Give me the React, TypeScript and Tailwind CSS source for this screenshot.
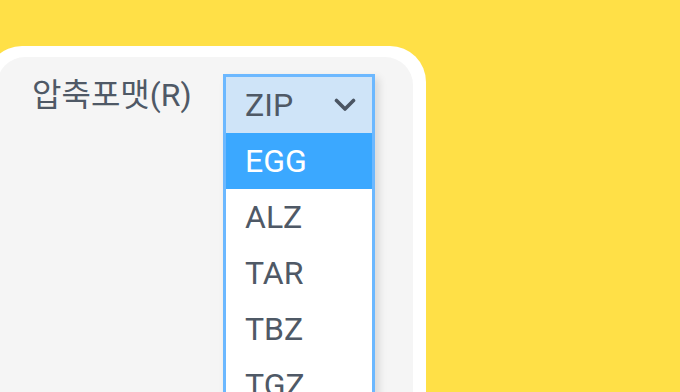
import React from "react";

const items = ["EGG", "ALZ", "TAR", "TBZ", "TGZ", "7Z"];

export default function App() {
  return (
    <div
      className="w-[680px] h-[392px] overflow-hidden bg-[#ffe047] pt-[46px]"
      style={{ fontFamily: "Roboto, 'Noto Sans CJK KR', sans-serif" }}
    >
      <div className="ml-[-14px] w-[440px] h-[400px] rounded-[36px] bg-white p-[11px] pr-[13px]">
        <div className="h-[420px] rounded-[28px] bg-[#f5f5f5] pt-[16px] pl-[35px] flex items-start">
          <div className="w-[191px] pt-[2px] text-[32px] leading-[40px] text-[#4f5966] font-normal">
            압축포맷(R)
          </div>
          <div className="mt-[1px] w-[152px] border-[3px] border-[#6cb8ff] bg-white shadow-[4px_4px_8px_rgba(0,0,0,0.12)]">
            <div className="h-[56px] bg-[#cfe4f8] flex items-center justify-between pl-[19px] pr-[16px] text-[32px] text-[#4f5966]">
              <span className="leading-none">ZIP</span>
              <svg width="22" height="14" viewBox="0 0 22 14" fill="none">
                <path d="M2.5 2.5 L11 11 L19.5 2.5" stroke="#4b5563" strokeWidth="3.6" strokeLinecap="round" strokeLinejoin="round" />
              </svg>
            </div>
            {items.map((it, i) => (
              <div
                key={it}
                className={
                  i === 0
                    ? "h-[56px] flex items-center pl-[19px] text-[32px] bg-[#3ba8ff] text-white"
                    : "h-[56px] flex items-center pl-[19px] text-[32px] text-[#4f5966]"
                }
              >
                <span className="leading-none">{it}</span>
              </div>
            ))}
          </div>
        </div>
      </div>
    </div>
  );
}
